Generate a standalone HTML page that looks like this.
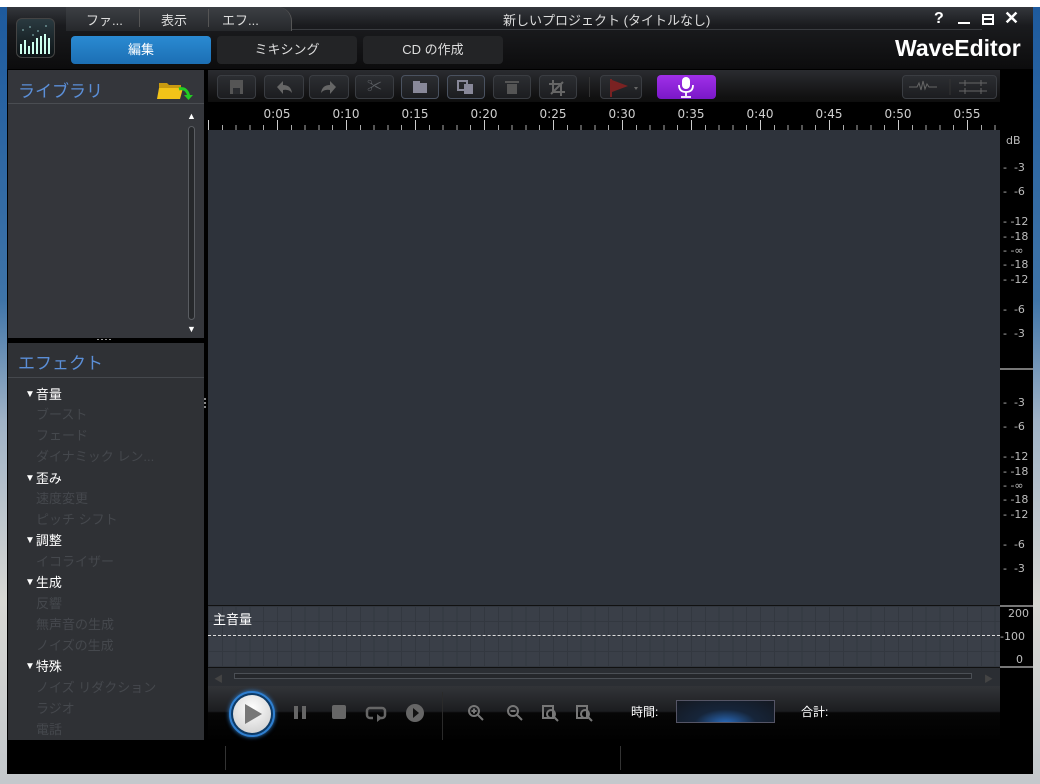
<!DOCTYPE html>
<html><head><meta charset="utf-8"><style>
*{margin:0;padding:0;box-sizing:border-box}
body{width:1040px;height:784px;overflow:hidden;position:relative;font-family:"Liberation Sans","Noto Sans CJK JP",sans-serif;background:linear-gradient(180deg,#1d5a9e 0,#3f74a8 300px,#9fb2c6 420px,#d8d8d4 600px,#c4c8cc 784px)}
.a{position:absolute}
.btn{position:absolute;top:75px;height:24px;border:1px solid #3a3d42;border-radius:4px;background:linear-gradient(#2c2e32,#1c1d20);color:#5b5e63;text-align:center;font-size:15px;line-height:22px}
.db{position:absolute;left:1003px;font-size:11px;color:#bdbdbd;font-family:"DejaVu Sans",sans-serif;white-space:pre}
.tr{position:absolute;left:25px;font-size:13px;color:#fff}
.tr span{font-size:10px;vertical-align:2px;margin-right:1px}
.it{position:absolute;left:36px;font-size:13px;color:#45484d}
.tk{position:absolute;top:107px;font-size:12px;color:#cfcfcf;font-family:"DejaVu Sans",sans-serif;width:40px;text-align:center}
</style></head><body>
<div class="a" style="left:0;top:0;width:1040px;height:7px;background:#fff"></div>
<div class="a" style="left:7px;top:7px;width:1026px;height:767px;background:#000"></div>
<!-- title bar -->
<div class="a" style="left:7px;top:7px;width:1026px;height:62px;background:linear-gradient(#34373c,#1a1b1e 30%,#0c0c0d)"></div>
<div class="a" style="left:66px;top:7px;width:226px;height:24px;background:linear-gradient(#3c3f44,#26282b);border-radius:0 14px 0 0;border-right:1px solid #555"></div>
<div class="a" style="left:86px;top:10px;font-size:13px;color:#ddd">ファ...</div>
<div class="a" style="left:139px;top:9px;width:1px;height:18px;background:#555"></div>
<div class="a" style="left:161px;top:10px;font-size:13px;color:#ddd">表示</div>
<div class="a" style="left:208px;top:9px;width:1px;height:18px;background:#555"></div>
<div class="a" style="left:222px;top:10px;font-size:13px;color:#ddd">エフ...</div>
<div class="a" style="left:292px;top:29px;width:690px;height:1px;background:#3a3c40"></div>
<div class="a" style="left:503px;top:10px;font-size:13px;color:#ddd">新しいプロジェクト (タイトルなし)</div>
<div class="a" style="left:934px;top:10px;font-size:16px;font-weight:bold;color:#fff">?</div>
<div class="a" style="left:958px;top:22px;width:12px;height:2px;background:#fff"></div>
<div class="a" style="left:982px;top:14px;width:12px;height:11px;border:2px solid #fff"></div>
<div class="a" style="left:982px;top:18px;width:12px;height:2px;background:#fff"></div>
<div class="a" style="left:1004px;top:8px;font-size:18px;font-weight:bold;color:#fff">✕</div>
<div class="a" style="left:895px;top:35px;font-size:23px;font-weight:bold;color:#fff">WaveEditor</div>
<!-- logo -->
<div class="a" style="left:16px;top:18px;width:39px;height:40px;border-radius:6px;background:linear-gradient(#2a3a40,#0d1416);border:1px solid #444"></div>
<svg class="a" style="left:18px;top:22px" width="36" height="34"><g fill="#cfe" ><rect x="2" y="22" width="2" height="10"/><rect x="6" y="18" width="2" height="14"/><rect x="10" y="24" width="2" height="8"/><rect x="14" y="20" width="2" height="12"/><rect x="18" y="16" width="2" height="16"/><rect x="22" y="14" width="2" height="18"/><rect x="26" y="12" width="2" height="20"/><rect x="30" y="16" width="2" height="16"/></g><g fill="#9cc" opacity=".6"><circle cx="5" cy="8" r="1"/><circle cx="12" cy="5" r="1"/><circle cx="20" cy="9" r="1"/><circle cx="28" cy="4" r="1"/><circle cx="15" cy="13" r="1"/></g></svg>
<!-- tabs -->
<div class="a" style="left:71px;top:36px;width:140px;height:28px;border-radius:4px;background:linear-gradient(#2a8ad2,#1c6fb4);color:#fff;font-size:13px;text-align:center;line-height:28px">編集</div>
<div class="a" style="left:217px;top:36px;width:140px;height:28px;border-radius:4px;background:#232426;color:#ddd;font-size:13px;text-align:center;line-height:28px">ミキシング</div>
<div class="a" style="left:363px;top:36px;width:140px;height:28px;border-radius:4px;background:#232426;color:#ddd;font-size:13px;text-align:center;line-height:28px">CD の作成</div>
<!-- left panel -->
<div class="a" style="left:8px;top:70px;width:196px;height:268px;background:#34363b"></div>
<div class="a" style="left:8px;top:103px;width:196px;height:1px;background:#4a4d52"></div>
<div class="a" style="left:18px;top:77px;font-size:17px;color:#5b8fd8">ライブラリ</div>
<svg class="a" style="left:157px;top:79px" width="36" height="22"><path d="M2 4h8l2 2h12v3H2z" fill="#c89a10"/><path d="M2 9h24l-3 11H0z" fill="#f2c318"/><path d="M22 10q8-2 10 8" stroke="#2c2" stroke-width="3" fill="none"/><path d="M27 16h9l-4.5 5z" fill="#2c2"/></svg>
<div class="a" style="left:187px;top:111px;font-size:9px;color:#fff">▲</div>
<div class="a" style="left:188px;top:126px;width:7px;height:194px;border:1px solid #5a5d62;border-radius:4px;background:#26282b"></div>
<div class="a" style="left:187px;top:324px;font-size:9px;color:#fff">▼</div>
<div class="a" style="left:8px;top:338px;width:196px;height:4px;background:#000"></div>
<div class="a" style="left:97px;top:339px;width:14px;height:1px;background:repeating-linear-gradient(90deg,#999 0 2px,transparent 2px 4px)"></div>
<div class="a" style="left:8px;top:343px;width:196px;height:397px;background:#2f3135"></div>
<div class="a" style="left:8px;top:377px;width:196px;height:1px;background:#45484d"></div>
<div class="a" style="left:18px;top:349px;font-size:17px;color:#5b8fd8">エフェクト</div>
<div class="tr" style="top:384px"><span>▼</span>音量</div>
<div class="it" style="top:404px">ブースト</div>
<div class="it" style="top:425px">フェード</div>
<div class="it" style="top:446px">ダイナミック レン...</div>
<div class="tr" style="top:468px"><span>▼</span>歪み</div>
<div class="it" style="top:488px">速度変更</div>
<div class="it" style="top:509px">ピッチ シフト</div>
<div class="tr" style="top:530px"><span>▼</span>調整</div>
<div class="it" style="top:551px">イコライザー</div>
<div class="tr" style="top:572px"><span>▼</span>生成</div>
<div class="it" style="top:593px">反響</div>
<div class="it" style="top:614px">無声音の生成</div>
<div class="it" style="top:635px">ノイズの生成</div>
<div class="tr" style="top:656px"><span>▼</span>特殊</div>
<div class="it" style="top:677px">ノイズ リダクション</div>
<div class="it" style="top:698px">ラジオ</div>
<div class="it" style="top:719px">電話</div>
<div class="a" style="left:204px;top:398px;width:2px;height:12px;background:repeating-linear-gradient(#888 0 2px,transparent 2px 4px)"></div>
<!-- main toolbar -->
<div class="a" style="left:208px;top:70px;width:792px;height:60px;background:linear-gradient(#2a2c30,#111 45%,#000)"></div>
<div class="btn" style="left:217px;width:39px"><svg width="37" height="22"><rect x="12" y="4" width="13" height="14" fill="#555"/><rect x="15" y="12" width="7" height="6" fill="#2a2c30"/></svg></div>
<div class="btn" style="left:264px;width:40px"><svg width="38" height="22"><path d="M12 11l6-6v4q8 0 9 8q-3-4-9-3v4z" fill="#666"/></svg></div>
<div class="btn" style="left:309px;width:40px"><svg width="38" height="22"><path d="M26 11l-6-6v4q-8 0-9 8q3-4 9-3v4z" fill="#666"/></svg></div>
<div class="btn" style="left:355px;width:39px">✂</div>
<div class="btn" style="left:401px;width:38px;border-color:#4a5260"><svg width="36" height="22"><rect x="11" y="5" width="7" height="12" fill="#889"/><rect x="18" y="7" width="7" height="10" fill="#889"/></svg></div>
<div class="btn" style="left:447px;width:38px;border-color:#4a5260"><svg width="36" height="22"><rect x="10" y="5" width="9" height="9" fill="none" stroke="#889" stroke-width="2"/><rect x="16" y="8" width="9" height="10" fill="#889"/></svg></div>
<div class="btn" style="left:493px;width:38px"><svg width="36" height="22"><rect x="11" y="5" width="14" height="2" fill="#555"/><rect x="13" y="8" width="10" height="10" fill="#555"/></svg></div>
<div class="btn" style="left:539px;width:38px"><svg width="36" height="22" stroke="#666" stroke-width="2" fill="none"><path d="M13 4v12h12M9 8h12v12M11 18l12-12"/></svg></div>
<div class="a" style="left:589px;top:77px;width:1px;height:20px;background:#333"></div>
<div class="btn" style="left:600px;width:42px"><svg width="40" height="22"><path d="M10 3v18" stroke="#7a2222" stroke-width="2"/><path d="M11 4l16 6-16 6z" fill="#7a2222"/><path d="M33 11l4 0-2 3z" fill="#666"/></svg></div>
<div class="a" style="left:657px;top:75px;width:59px;height:24px;border-radius:4px;background:linear-gradient(#a030e8,#7a18c8)"><svg width="59" height="24"><rect x="25" y="2" width="8" height="12" rx="4" fill="#fff"/><path d="M22 10q0 7 7 7q7 0 7-7M29 17v4M24 22h10" stroke="#fff" stroke-width="1.8" fill="none"/></svg></div>
<div class="btn" style="left:902px;width:95px"><svg width="93" height="22"><path d="M6 11h8l2-4 2 7 2-9 2 8 2-5 2 3h8" stroke="#666" fill="none"/><path d="M47 3v16" stroke="#333"/><path d="M56 7h28M56 15h28M62 4v6M78 4v6M62 12v6M78 12v6" stroke="#666"/></svg></div>
<!-- ruler -->
<div class="a" style="left:208px;top:102px;width:792px;height:28px;background:#000"></div>
<div class="a" style="left:208px;top:125px;width:792px;height:5px;background:repeating-linear-gradient(90deg,#aaa 0 1px,transparent 1px 13.8px)"></div>
<div class="a" style="left:208px;top:120px;width:792px;height:10px;background:repeating-linear-gradient(90deg,#ccc 0 1px,transparent 1px 69px)"></div>
<div class="tk" style="left:257px">0:05</div><div class="tk" style="left:326px">0:10</div><div class="tk" style="left:395px">0:15</div><div class="tk" style="left:464px">0:20</div><div class="tk" style="left:533px">0:25</div><div class="tk" style="left:602px">0:30</div><div class="tk" style="left:671px">0:35</div><div class="tk" style="left:740px">0:40</div><div class="tk" style="left:809px">0:45</div><div class="tk" style="left:878px">0:50</div><div class="tk" style="left:947px">0:55</div>
<!-- wave area -->
<div class="a" style="left:208px;top:130px;width:792px;height:475px;background:#2e333b"></div>
<!-- volume -->
<div class="a" style="left:208px;top:605px;width:792px;height:62px;background-color:#3a3f48;background-image:repeating-linear-gradient(90deg,#333840 0 1px,transparent 1px 13.8px),repeating-linear-gradient(#333840 0 1px,transparent 1px 15px);border-top:1px solid #111"></div>
<div class="a" style="left:213px;top:609px;font-size:13px;color:#fff">主音量</div>
<div class="a" style="left:208px;top:635px;width:792px;height:0;border-top:1px dashed #ddd"></div>
<!-- scrollbar -->
<div class="a" style="left:208px;top:667px;width:792px;height:19px;background:#2b2e33;border-top:1px solid #111"></div>
<div class="a" style="left:214px;top:672px;font-size:9px;color:#444">◀</div>
<div class="a" style="left:984px;top:672px;font-size:9px;color:#444">▶</div>
<div class="a" style="left:234px;top:673px;width:738px;height:6px;border:1px solid #4b4f55;background:#25272b"></div>
<!-- transport -->
<div class="a" style="left:208px;top:686px;width:792px;height:56px;background:linear-gradient(#323438,#1c1d20 45%,#060606 48%,#000)"></div>
<div class="a" style="left:229px;top:691px;width:46px;height:46px;border-radius:50%;background:#0d3a66;border:2px solid #2f7fd0;box-shadow:0 0 4px #2f7fd0"></div>
<div class="a" style="left:233px;top:695px;width:38px;height:38px;border-radius:50%;background:radial-gradient(circle at 50% 35%,#fff,#c8c8c8)"></div>
<svg class="a" style="left:242px;top:703px" width="22" height="22"><path d="M3 1l17 10-17 10z" fill="#777"/></svg>
<div class="a" style="left:294px;top:706px;width:4px;height:13px;background:#666"></div><div class="a" style="left:302px;top:706px;width:4px;height:13px;background:#666"></div>
<div class="a" style="left:332px;top:705px;width:14px;height:14px;background:#666;border-radius:2px"></div>
<svg class="a" style="left:365px;top:703px" width="24" height="20"><path d="M8 15H5a3 3 0 0 1-3-3V8a3 3 0 0 1 3-3h12a3 3 0 0 1 3 3v4a3 3 0 0 1-3 3h-4" stroke="#666" stroke-width="2.5" fill="none"/><path d="M12 11v8l5-4z" fill="#666"/></svg>
<svg class="a" style="left:405px;top:703px" width="20" height="20"><circle cx="10" cy="10" r="9" fill="#666"/><path d="M8 5l6 5-6 5z" fill="#111"/></svg>
<div class="a" style="left:442px;top:692px;width:1px;height:48px;background:#2a2a2a"></div>
<svg class="a" style="left:466px;top:703px" width="140" height="22" stroke="#777" stroke-width="2" fill="none"><circle cx="8" cy="8" r="5"/><path d="M12 12l5 5M5.5 8h5M8 5.5v5"/><circle cx="47" cy="8" r="5"/><path d="M51 12l5 5M44.5 8h5"/><rect x="77" y="3" width="10" height="12"/><circle cx="85" cy="11" r="4"/><path d="M88 14l4 4"/><rect x="111" y="3" width="10" height="12"/><circle cx="119" cy="11" r="4"/><path d="M122 14l4 4"/></svg>
<div class="a" style="left:631px;top:703px;font-size:12px;color:#fff">時間:</div>
<div class="a" style="left:676px;top:700px;width:99px;height:23px;border:1px solid #556;background:radial-gradient(ellipse at 50% 110%,#2b6fc4 0,#16253a 45%,#141820 100%)"></div>
<div class="a" style="left:801px;top:703px;font-size:12px;color:#fff">合計:</div>
<!-- dB scale -->
<div class="a" style="left:1000px;top:368px;width:33px;height:2px;background:#777"></div>
<div class="a" style="left:1000px;top:605px;width:33px;height:2px;background:#777"></div>
<div class="a" style="left:1000px;top:666px;width:33px;height:2px;background:#777"></div>
<div class="db" style="top:134px;left:1006px">dB</div>
<div class="db" style="top:161px">-  -3</div><div class="db" style="top:185px">-  -6</div><div class="db" style="top:215px">- -12</div><div class="db" style="top:230px">- -18</div><div class="db" style="top:244px">- -∞</div><div class="db" style="top:258px">- -18</div><div class="db" style="top:273px">- -12</div><div class="db" style="top:303px">-  -6</div><div class="db" style="top:327px">-  -3</div>
<div class="db" style="top:396px">-  -3</div><div class="db" style="top:420px">-  -6</div><div class="db" style="top:450px">- -12</div><div class="db" style="top:465px">- -18</div><div class="db" style="top:479px">- -∞</div><div class="db" style="top:493px">- -18</div><div class="db" style="top:508px">- -12</div><div class="db" style="top:538px">-  -6</div><div class="db" style="top:562px">-  -3</div>
<div class="db" style="top:607px;left:1008px">200</div><div class="db" style="top:630px;left:1000px">-100</div><div class="db" style="top:653px;left:1016px">0</div>
<!-- status bar -->
<div class="a" style="left:225px;top:746px;width:1px;height:24px;background:#333"></div>
<div class="a" style="left:620px;top:746px;width:1px;height:24px;background:#333"></div>
</body></html>
